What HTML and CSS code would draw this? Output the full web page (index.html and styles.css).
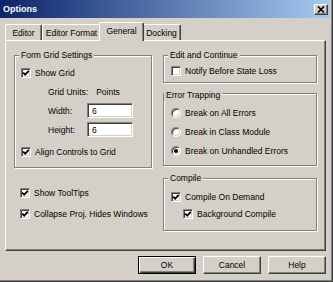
FILE: index.html
```html
<!DOCTYPE html>
<html lang="en">
<head>
    <meta charset="UTF-8">
    <title>Options</title>
    <link rel="stylesheet" href="styles.css">
</head>
<body>
    <div class="dialog">
        <!-- Title Bar -->
        <div class="titlebar">
            <span class="title">Options</span>
            <span class="close-btn">
                <svg width="8" height="7" viewBox="0 0 8 7"><path d="M1 0.5 L7 6.5 M7 0.5 L1 6.5" stroke="#000" stroke-width="1.6"/></svg>
            </span>
        </div>

        <!-- Tabs -->
        <div class="tabs">
            <div class="tab tab-editor">Editor</div>
            <div class="tab tab-format">Editor Format</div>
            <div class="tab tab-general active">General</div>
            <div class="tab tab-docking">Docking</div>
        </div>

        <!-- General Page -->
        <div class="panel">
            <div class="column column-left">
                <div class="group group-grid">
                    <div class="group-title">Form Grid Settings</div>
                    <div class="check-row row-showgrid"><span class="checkbox"><svg class="tick" viewBox="0 0 8 8"><path d="M1.2 3.6 L3.2 5.6 L6.8 1.8"/></svg></span>Show Grid</div>
                    <div class="units-row"><span>Grid Units:</span><span class="units-value">Points</span></div>
                    <div class="field-row row-width"><span class="field-label">Width:</span><span class="textbox">6</span></div>
                    <div class="field-row row-height"><span class="field-label">Height:</span><span class="textbox">6</span></div>
                    <div class="check-row row-align"><span class="checkbox"><svg class="tick" viewBox="0 0 8 8"><path d="M1.2 3.6 L3.2 5.6 L6.8 1.8"/></svg></span>Align Controls to Grid</div>
                </div>
                <div class="check-row row-tooltips"><span class="checkbox"><svg class="tick" viewBox="0 0 8 8"><path d="M1.2 3.6 L3.2 5.6 L6.8 1.8"/></svg></span>Show ToolTips</div>
                <div class="check-row row-collapse"><span class="checkbox"><svg class="tick" viewBox="0 0 8 8"><path d="M1.2 3.6 L3.2 5.6 L6.8 1.8"/></svg></span>Collapse Proj. Hides Windows</div>
            </div>

            <div class="column column-right">
                <div class="group group-edit">
                    <div class="group-title">Edit and Continue</div>
                    <div class="check-row row-notify"><span class="checkbox"></span>Notify Before State Loss</div>
                </div>
                <div class="group group-errors">
                    <div class="group-title">Error Trapping</div>
                    <div class="check-row row-radio1"><span class="radio"></span>Break on All Errors</div>
                    <div class="check-row row-radio"><span class="radio"></span>Break in Class Module</div>
                    <div class="check-row row-radio"><span class="radio checked"></span>Break on Unhandled Errors</div>
                </div>
                <div class="group group-compile">
                    <div class="group-title">Compile</div>
                    <div class="check-row row-demand"><span class="checkbox"><svg class="tick" viewBox="0 0 8 8"><path d="M1.2 3.6 L3.2 5.6 L6.8 1.8"/></svg></span>Compile On Demand</div>
                    <div class="check-row row-background"><span class="checkbox"><svg class="tick" viewBox="0 0 8 8"><path d="M1.2 3.6 L3.2 5.6 L6.8 1.8"/></svg></span>Background Compile</div>
                </div>
            </div>
        </div>

        <!-- Buttons -->
        <div class="buttons">
            <div class="btn btn-default">OK</div>
            <div class="btn">Cancel</div>
            <div class="btn">Help</div>
        </div>
    </div>
</body>
</html>
```

FILE: styles.css
```css
/* General Styles */
body {
    margin: 0;
    font-family: "Liberation Sans", Arial, sans-serif;
    font-size: 8.5px;
    color: #000;
    background-color: #d4d0c8;
}

.dialog {
    width: 333px;
    height: 282px;
    box-sizing: border-box;
    padding-right: 3px;
    background-color: #d4d0c8; /* classic 3D face */
    box-shadow: inset -1px -1px 0 #404040, inset -2px -2px 0 #808080;
}

/* Title Bar */
.titlebar {
    height: 18px;
    display: flex;
    align-items: center;
    justify-content: space-between;
    padding-left: 3px;
    background: linear-gradient(to right, #0a246a, #a6caf0);
}

.title {
    color: #fff;
    font-weight: bold;
    font-size: 9px;
}

.close-btn {
    width: 14px;
    height: 11px;
    margin-right: 2px;
    box-sizing: border-box;
    background-color: #d4d0c8;
    border: 1px solid;
    border-color: #fff #404040 #404040 #fff;
    box-shadow: inset -1px -1px 0 #808080;
    display: flex;
    align-items: center;
    justify-content: center;
}

/* Tabs */
.tabs {
    display: flex;
    align-items: flex-end;
    height: 18px;
    margin: 4px 0 0 5px;
}

.tab {
    height: 16px;
    box-sizing: border-box;
    border: 1px solid;
    border-bottom: none;
    border-color: #fff #404040 transparent #fff;
    border-radius: 2px 2px 0 0;
    box-shadow: inset -1px 0 0 #808080;
    display: flex;
    align-items: center;
    justify-content: center;
}

.tab-editor { width: 37px; }
.tab-format { width: 59px; }
.tab-general { width: 41px; }
.tab-docking { width: 39px; }

.tab.active {
    position: relative;
    z-index: 1;
    width: 45px;
    height: 19px;
    margin: 0 -2px -1px;
    padding-bottom: 3px;
    background-color: #d4d0c8;
}

/* Tab Page */
.panel {
    margin-left: 5px;
    width: 321px;
    height: 211px;
    box-sizing: border-box;
    border: 1px solid;
    border-color: #fff #404040 #404040 #fff;
    box-shadow: inset -1px -1px 0 #808080;
    padding: 14px 8px 0;
    display: flex;
    gap: 11px;
}

.column-left { width: 138px; }
.column-right { width: 154px; }

/* Group Boxes */
.group {
    box-sizing: border-box;
    border: 1px solid #808080;
    box-shadow: inset 1px 1px 0 #fff, 1px 1px 0 #fff; /* etched look */
}

.group-title {
    width: fit-content;
    margin: -6px 0 0 4px;
    padding: 0 2px;
    line-height: 11px;
    background-color: #d4d0c8;
}

.group-grid { height: 113px; }
.group-edit { height: 28px; }
.group-errors { height: 73px; margin-top: 10px; }
.group-compile { height: 53px; margin-top: 12px; }

.group-errors .group-title {
    margin: -4px 0 0 0;
}

/* Rows */
.check-row {
    display: flex;
    align-items: center;
    gap: 4px;
    height: 12px;
    padding-left: 6px;
    white-space: nowrap;
}

.column-right .check-row { padding-left: 7px; }

.row-showgrid { margin-top: 6px; }
.row-align { margin-top: 9px; }
.row-tooltips { margin-top: 19px; }
.row-collapse { margin-top: 9px; }
.row-notify { margin-top: 4px; }
.row-radio1 { margin-top: 6px; }
.row-radio { margin-top: 7px; }
.row-demand { margin-top: 7px; }
.column-right .row-background { margin-top: 5px; padding-left: 19px; }

.units-row {
    height: 12px;
    display: flex;
    align-items: center;
    margin-top: 7px;
    padding-left: 33px;
}

.units-value { margin-left: 8px; }

.field-row {
    height: 15px;
    display: flex;
    align-items: center;
    padding-left: 33px;
}

.row-width { margin-top: 5px; }
.row-height { margin-top: 4px; }

.field-label { width: 39px; }

/* Controls */
.textbox {
    width: 46px;
    height: 15px;
    box-sizing: border-box;
    background-color: #fff;
    border: 1px solid;
    border-color: #808080 #fff #fff #808080;
    box-shadow: inset 1px 1px 0 #404040, inset -1px -1px 0 #d4d0c8;
    padding-left: 4px;
    display: flex;
    align-items: center;
}

.checkbox,
.radio {
    flex: none;
    width: 10px;
    height: 10px;
    box-sizing: border-box;
    background-color: #fff;
    border: 1px solid;
    border-color: #808080 #fff #fff #808080;
    box-shadow: inset 1px 1px 0 #404040, inset -1px -1px 0 #d4d0c8;
    display: flex;
    align-items: center;
    justify-content: center;
}

.tick {
    width: 8px;
    height: 8px;
}

.tick path {
    fill: none;
    stroke: #000;
    stroke-width: 1.8;
}

.radio {
    border-radius: 50%;
}

.radio.checked::after {
    content: "";
    width: 4px;
    height: 4px;
    border-radius: 50%;
    background-color: #000;
}

/* Buttons */
.buttons {
    display: flex;
    justify-content: flex-end;
    gap: 7px;
    margin: 5px 4px 0 0;
}

.btn {
    width: 58px;
    height: 18px;
    box-sizing: border-box;
    border: 1px solid;
    border-color: #fff #404040 #404040 #fff;
    box-shadow: inset -1px -1px 0 #808080;
    display: flex;
    align-items: center;
    justify-content: center;
}

.btn-default {
    border-color: #000;
    box-shadow: inset 1px 1px 0 #fff, inset -1px -1px 0 #404040, inset -2px -2px 0 #808080;
}
```
